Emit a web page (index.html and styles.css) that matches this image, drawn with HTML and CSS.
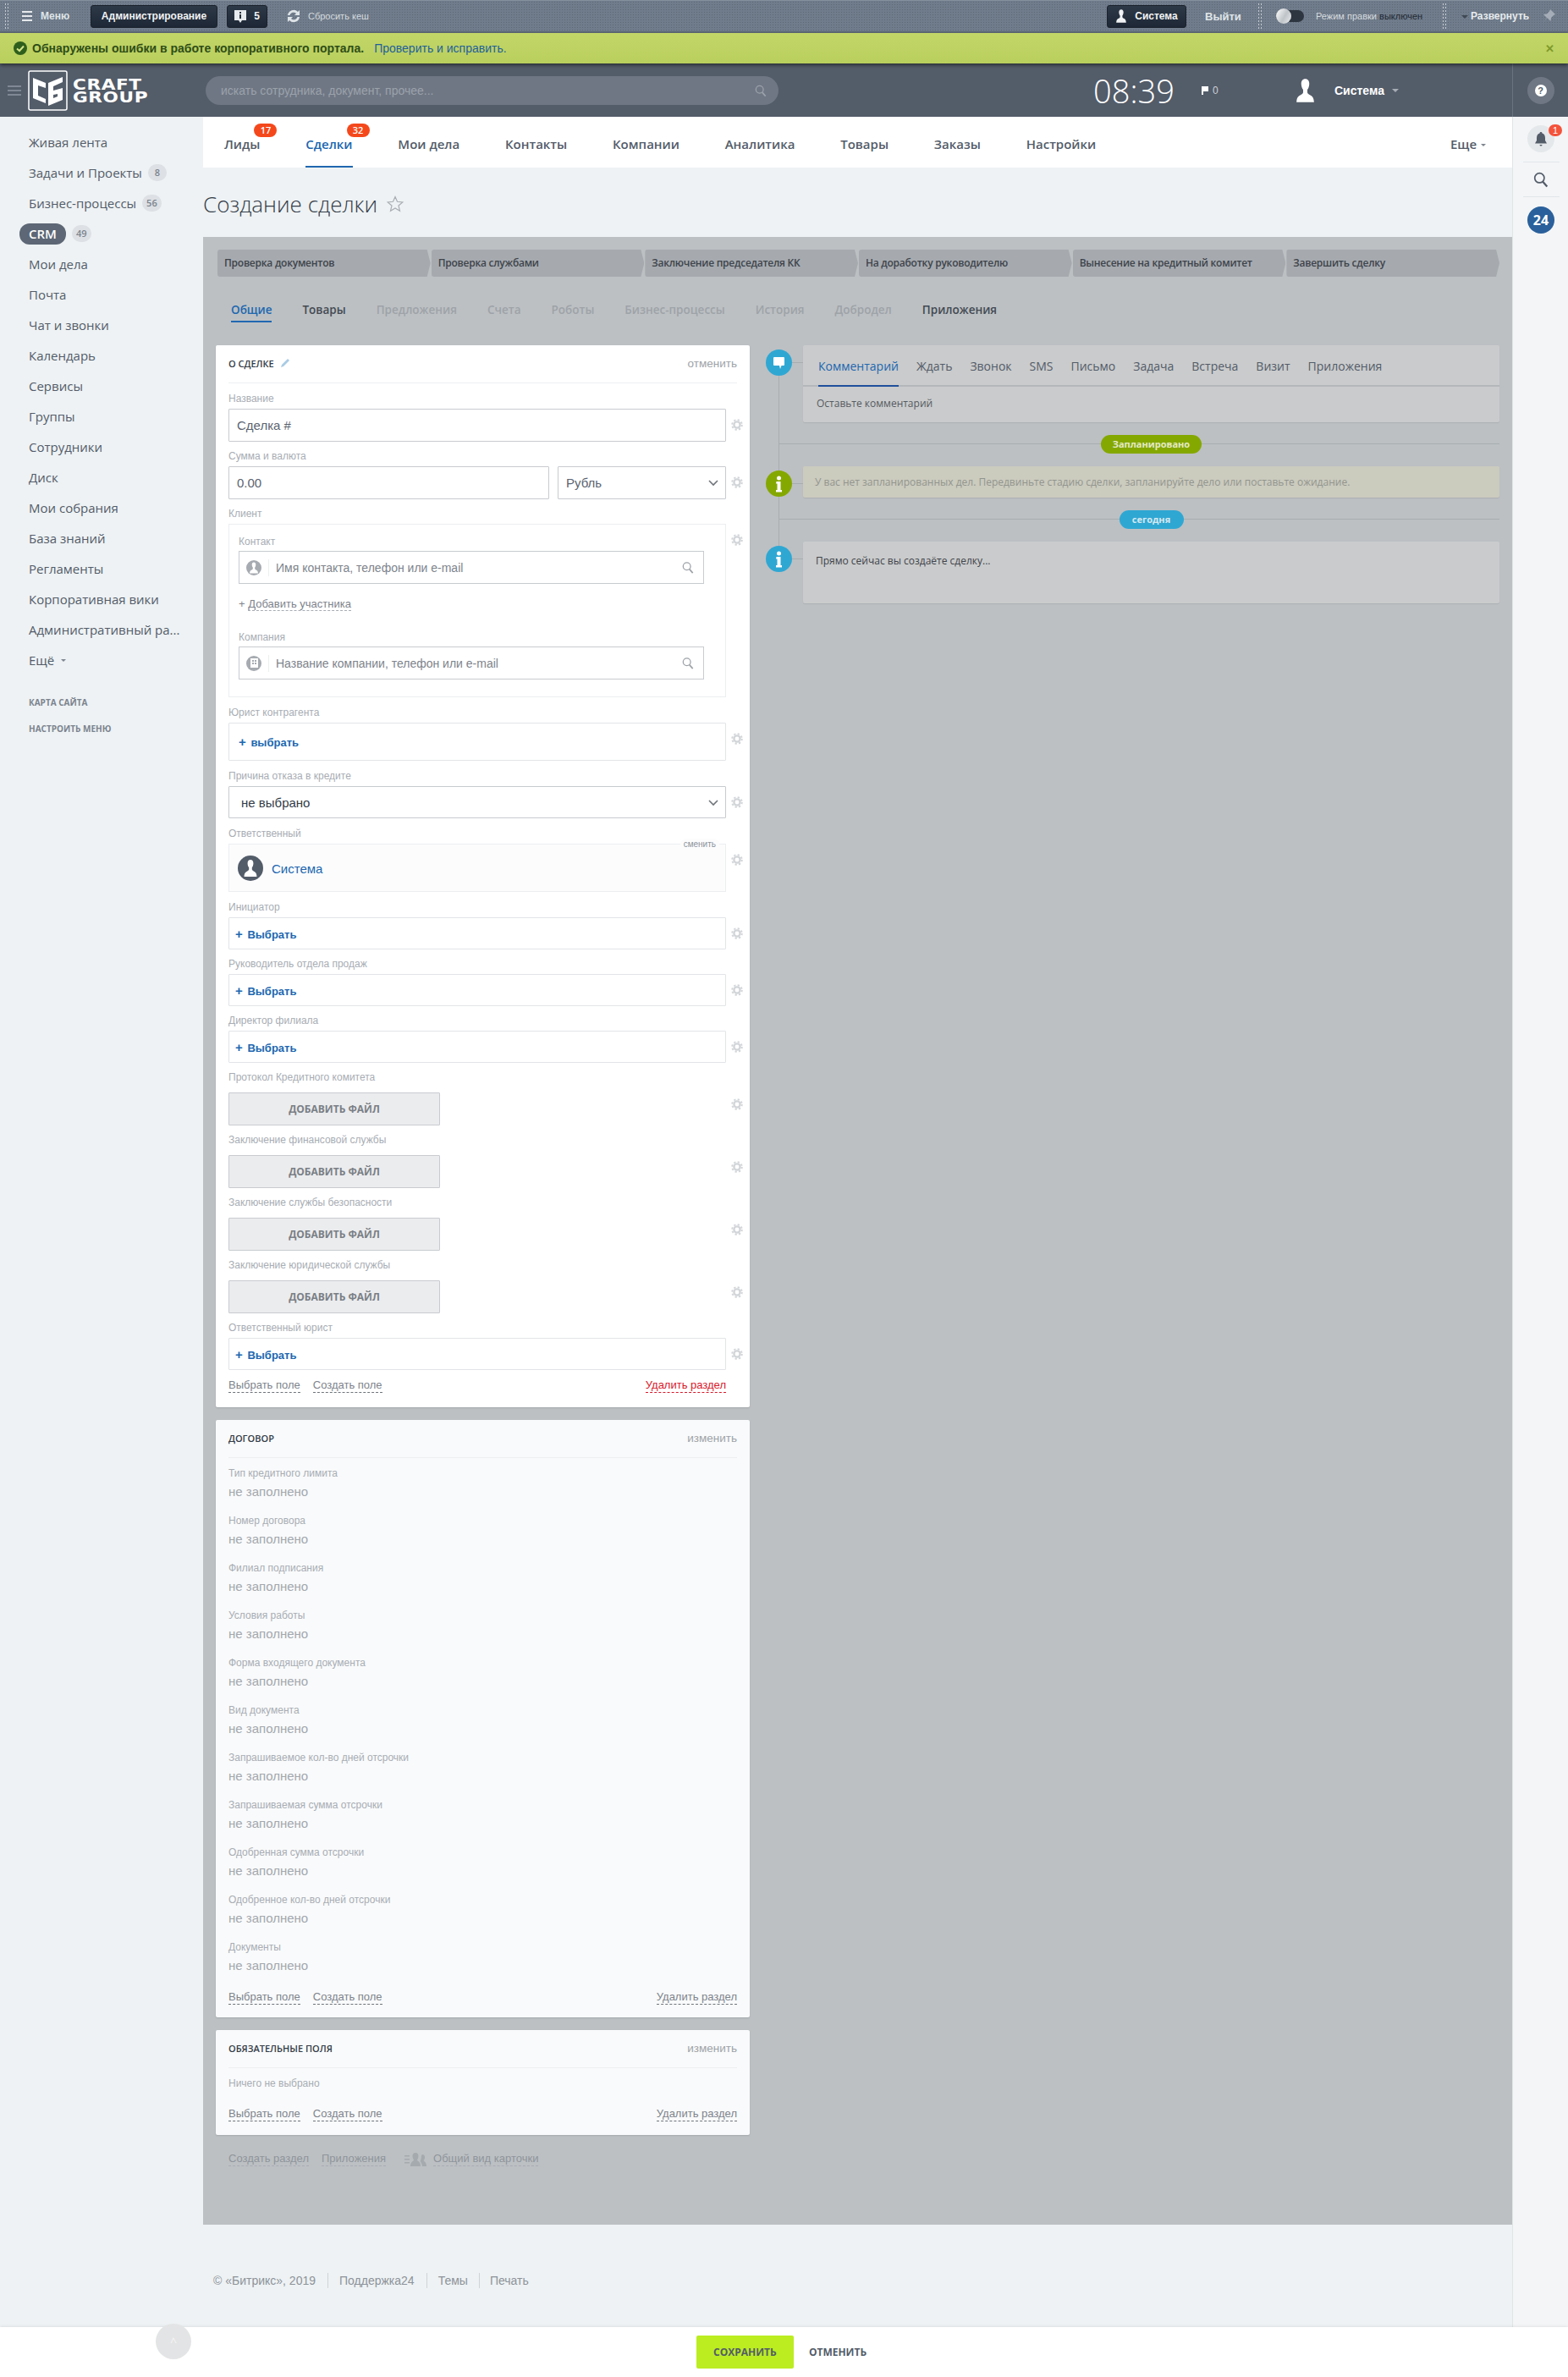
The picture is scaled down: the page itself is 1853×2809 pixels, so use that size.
FILE: index.html
```html
<!DOCTYPE html>
<html lang="ru">
<head>
    <meta charset="UTF-8">
    <meta name="viewport" content="width=device-width, initial-scale=1.0">
    <title>Создание сделки</title>
    <link rel="stylesheet" href="styles.css">
</head>
<body>
    <svg class="sprite" width="0" height="0">
        <symbol id="gear" viewBox="0 0 14 14">
            <circle cx="7" cy="7" r="3.6" fill="none" stroke="currentColor" stroke-width="2.4"/>
            <circle cx="7" cy="7" r="5.8" fill="none" stroke="currentColor" stroke-width="2" stroke-dasharray="2.3 2.25"/>
        </symbol>
        <symbol id="lens" viewBox="0 0 16 16">
            <circle cx="6.5" cy="6.5" r="5" fill="none" stroke="currentColor" stroke-width="1.5"/>
            <path d="M10 10.5l4.5 5" fill="none" stroke="currentColor" stroke-width="2"/>
        </symbol>
        <symbol id="person" viewBox="0 0 20 22">
            <path d="M10 0c2.6 0 3.8 2 3.8 4.6 0 2.300-.8 4.400-1.800 5.600v2.300c0 1.200 1 1.800 2.400 2.600 2 1 3.600 2 3.900 6.900H1.700c.3-4.900 1.900-5.900 3.900-6.900 1.400-.8 2.400-1.400 2.400-2.600v-2.300C7 9 6.200 6.900 6.200 4.600 6.200 2 7.400 0 10 0z" fill="currentColor"/>
        </symbol>
        <symbol id="info" viewBox="0 0 31 31">
            <circle cx="15.500" cy="9" r="2.500" fill="#fff"/>
            <path d="M12.500 13h5v10h1.500v2.500h-7V23h1.500v-7.500h-1.500z" fill="#fff"/>
        </symbol>
    </svg>

    <div class="admin-bar">
        <span class="grip"></span>
        <span class="burger small"><i></i><i></i><i></i></span>
        <span class="admin-menu">Меню</span>
        <a class="dark-btn admin-btn">Администрирование</a>
        <a class="dark-btn count-btn">
            <svg width="14" height="17" viewBox="0 0 14 17"><path d="M0 1h14v12H9l-2 3-2-3H0z" fill="#e7ebee"/><path d="M6 3h2v2H6zM6 6h2v5H6z" fill="#27303c"/></svg>
            <span>5</span>
        </a>
        <svg class="cache-icon" width="18" height="18" viewBox="0 0 18 18"><path d="M2 8a7 7 0 0 1 12-4l2-2v6h-6l2-2a4.500 4.500 0 0 0-7.500 2zM16 10a7 7 0 0 1-12 4l-2 2v-6h6l-2 2a4.500 4.500 0 0 0 7.500-2z" fill="#dfe4e8"/></svg>
        <span class="cache-text">Сбросить кеш</span>

        <a class="dark-btn user-btn">
            <svg width="14" height="16"><use href="#person"/></svg>
            Система
        </a>
        <span class="logout">Выйти</span>
        <span class="grip"></span>
        <span class="toggle"><i></i></span>
        <span class="edit-mode">Режим правки <b>выключен</b></span>
        <span class="grip"></span>
        <span class="expand">Развернуть</span>
        <svg class="pin" width="16" height="16" viewBox="0 0 16 16"><path d="M10 0l6 6-2 1-3 3-.5 4-4-4-5.500 6 5-6-4-4 4-.5 3-3z" fill="#a5aeb8"/></svg>
    </div>

    <div class="notice">
        <svg class="notice-check" width="16" height="16" viewBox="0 0 16 16"><circle cx="8" cy="8" r="8" fill="#2f5f1c"/><path d="M4 8.500l3 2.500 5-5.500" fill="none" stroke="#d6e58a" stroke-width="2"/></svg>
        <b>Обнаружены ошибки в работе корпоративного портала.</b>
        <a>Проверить и исправить.</a>
        <span class="notice-close">✕</span>
    </div>

    <header class="header">
        <span class="burger"><i></i><i></i><i></i></span>
        <div class="logo">
            <svg class="logo-mark" width="47" height="48" viewBox="0 0 47 48">
                <rect x="1" y="1" width="45" height="46" rx="2" fill="none" stroke="#fff" stroke-width="1.500"/>
                <path d="M6 9l15 6v6l-9-3v12l9 4v5L6 33z" fill="#fff"/>
                <path d="M41 8L24 15v27l17-7V21l-11 3v5l5-1v3l-5 2V19l11-5z" fill="#fff"/>
            </svg>
            <div class="logo-text">CRAFT<br>GROUP</div>
        </div>
        <div class="search">
            <span>искать сотрудника, документ, прочее...</span>
            <svg width="14" height="16"><use href="#lens"/></svg>
        </div>
        <div class="clock">08:39</div>
        <div class="flag">
            <svg width="8" height="10" viewBox="0 0 8 10"><path d="M0 0h8v6H2v4H0z" fill="#fff"/></svg>
            <span>0</span>
        </div>
        <svg class="avatar" width="25" height="28"><use href="#person"/></svg>
        <div class="user-name">Система</div>
        <span class="caret"></span>
        <div class="header-rail"><span class="help"><i>?</i></span></div>
    </header>

    <div class="page">
        <aside class="sidebar">
            <ul class="side-menu">
                <li>Живая лента</li>
                <li>Задачи и Проекты <span class="count">8</span></li>
                <li>Бизнес-процессы <span class="count">56</span></li>
                <li class="side-active"><span class="pill">CRM</span> <span class="count">49</span></li>
                <li>Мои дела</li>
                <li>Почта</li>
                <li>Чат и звонки</li>
                <li>Календарь</li>
                <li>Сервисы</li>
                <li>Группы</li>
                <li>Сотрудники</li>
                <li>Диск</li>
                <li>Мои собрания</li>
                <li>База знаний</li>
                <li>Регламенты</li>
                <li>Корпоративная вики</li>
                <li>Административный ра...</li>
                <li>Ещё <span class="caret gray"></span></li>
            </ul>
            <div class="side-links">
                <a>КАРТА САЙТА</a>
                <a>НАСТРОИТЬ МЕНЮ</a>
            </div>
        </aside>

        <main class="content">
            <nav class="top-nav">
                <a class="nav-item">Лиды<span class="nav-badge">17</span></a>
                <a class="nav-item active">Сделки<span class="nav-badge">32</span></a>
                <a class="nav-item">Мои дела</a>
                <a class="nav-item">Контакты</a>
                <a class="nav-item">Компании</a>
                <a class="nav-item">Аналитика</a>
                <a class="nav-item">Товары</a>
                <a class="nav-item">Заказы</a>
                <a class="nav-item">Настройки</a>
                <a class="nav-item nav-more">Еще <span class="caret gray"></span></a>
            </nav>

            <div class="title-row">
                <h1>Создание сделки</h1>
                <svg width="20" height="20" viewBox="0 0 20 20"><path d="M10 1.500l2.500 5.800 6.300.6-4.800 4.100 1.500 6.200L10 15l-5.500 3.200L6 12 1.200 7.900l6.300-.6z" fill="none" stroke="#a9aeb3" stroke-width="1.200"/></svg>
            </div>

            <section class="panel">
                <div class="stages">
                    <div class="stage">Проверка документов</div>
                    <div class="stage">Проверка службами</div>
                    <div class="stage">Заключение председателя КК</div>
                    <div class="stage">На доработку руководителю</div>
                    <div class="stage">Вынесение на кредитный комитет</div>
                    <div class="stage">Завершить сделку</div>
                </div>

                <div class="tabs">
                    <a class="tab active">Общие</a>
                    <a class="tab dark">Товары</a>
                    <a class="tab">Предложения</a>
                    <a class="tab">Счета</a>
                    <a class="tab">Роботы</a>
                    <a class="tab">Бизнес-процессы</a>
                    <a class="tab">История</a>
                    <a class="tab">Добродел</a>
                    <a class="tab dark">Приложения</a>
                </div>

                <div class="columns">
                    <div class="left-col">
                        <div class="card edit-card">
                            <div class="card-head">
                                <span class="card-title">О СДЕЛКЕ
                                    <svg width="10" height="10" viewBox="0 0 10 10"><path d="M8 0l2 2-7 7-3 1 1-3z" fill="#a9cbe4"/></svg>
                                </span>
                                <a class="card-action">отменить</a>
                            </div>

                            <div class="field">
                                <div class="label">Название</div>
                                <div class="row">
                                    <input class="input" value="Сделка #">
                                    <svg class="gear"><use href="#gear"/></svg>
                                </div>
                            </div>

                            <div class="field">
                                <div class="label">Сумма и валюта</div>
                                <div class="row">
                                    <div class="money">
                                        <input class="input money-value" value="0.00">
                                        <div class="select-wrap money-currency">
                                            <select class="input select"><option>Рубль</option></select>
                                            <svg class="chevron" width="12" height="8" viewBox="0 0 12 8"><path d="M1 1l5 5 5-5" fill="none" stroke="#6f747a" stroke-width="1.600"/></svg>
                                        </div>
                                    </div>
                                    <svg class="gear"><use href="#gear"/></svg>
                                </div>
                            </div>

                            <div class="field field-loose">
                                <div class="label">Клиент</div>
                                <div class="row">
                                    <div class="client-box">
                                        <div class="label inner">Контакт</div>
                                        <div class="search-input">
                                            <span class="entity-icon"><svg width="12" height="14"><use href="#person"/></svg></span>
                                            <span class="search-text">Имя контакта, телефон или e-mail</span>
                                            <svg class="lens" width="14" height="15"><use href="#lens"/></svg>
                                        </div>
                                        <div class="add-member">+ <a>Добавить участника</a></div>
                                        <div class="label inner">Компания</div>
                                        <div class="search-input">
                                            <span class="entity-icon"><svg width="9" height="11" viewBox="0 0 9 11"><path d="M0 0h9v11H0z" fill="#fff"/><path d="M2 2h2v2H2zM5 2h2v2H5zM2 5h2v2H2zM5 5h2v2H5z" fill="#a6abb1"/></svg></span>
                                            <span class="search-text">Название компании, телефон или e-mail</span>
                                            <svg class="lens" width="14" height="15"><use href="#lens"/></svg>
                                        </div>
                                    </div>
                                    <svg class="gear"><use href="#gear"/></svg>
                                </div>
                            </div>

                            <div class="field field-loose">
                                <div class="label">Юрист контрагента</div>
                                <div class="row">
                                    <div class="picker tall"><a class="pick"><span>+</span> выбрать</a></div>
                                    <svg class="gear"><use href="#gear"/></svg>
                                </div>
                            </div>

                            <div class="field field-loose">
                                <div class="label">Причина отказа в кредите</div>
                                <div class="row">
                                    <div class="select-wrap full">
                                        <select class="input select dark-value"><option>не выбрано</option></select>
                                        <svg class="chevron" width="12" height="8" viewBox="0 0 12 8"><path d="M1 1l5 5 5-5" fill="none" stroke="#6f747a" stroke-width="1.600"/></svg>
                                    </div>
                                    <svg class="gear"><use href="#gear"/></svg>
                                </div>
                            </div>

                            <div class="field field-loose">
                                <div class="label">Ответственный</div>
                                <div class="row">
                                    <div class="owner-box">
                                        <span class="owner-avatar"><svg width="18" height="20"><use href="#person"/></svg></span>
                                        <a class="owner-name">Система</a>
                                        <span class="owner-change">сменить</span>
                                    </div>
                                    <svg class="gear"><use href="#gear"/></svg>
                                </div>
                            </div>

                            <div class="field">
                                <div class="label">Инициатор</div>
                                <div class="row">
                                    <div class="picker"><a class="pick"><span>+</span> Выбрать</a></div>
                                    <svg class="gear"><use href="#gear"/></svg>
                                </div>
                            </div>

                            <div class="field">
                                <div class="label">Руководитель отдела продаж</div>
                                <div class="row">
                                    <div class="picker"><a class="pick"><span>+</span> Выбрать</a></div>
                                    <svg class="gear"><use href="#gear"/></svg>
                                </div>
                            </div>

                            <div class="field">
                                <div class="label">Директор филиала</div>
                                <div class="row">
                                    <div class="picker"><a class="pick"><span>+</span> Выбрать</a></div>
                                    <svg class="gear"><use href="#gear"/></svg>
                                </div>
                            </div>

                            <div class="field field-file">
                                <div class="label">Протокол Кредитного комитета</div>
                                <div class="row">
                                    <button class="file-btn">ДОБАВИТЬ ФАЙЛ</button>
                                    <svg class="gear"><use href="#gear"/></svg>
                                </div>
                            </div>

                            <div class="field field-file">
                                <div class="label">Заключение финансовой службы</div>
                                <div class="row">
                                    <button class="file-btn">ДОБАВИТЬ ФАЙЛ</button>
                                    <svg class="gear"><use href="#gear"/></svg>
                                </div>
                            </div>

                            <div class="field field-file">
                                <div class="label">Заключение службы безопасности</div>
                                <div class="row">
                                    <button class="file-btn">ДОБАВИТЬ ФАЙЛ</button>
                                    <svg class="gear"><use href="#gear"/></svg>
                                </div>
                            </div>

                            <div class="field field-file">
                                <div class="label">Заключение юридической службы</div>
                                <div class="row">
                                    <button class="file-btn">ДОБАВИТЬ ФАЙЛ</button>
                                    <svg class="gear"><use href="#gear"/></svg>
                                </div>
                            </div>

                            <div class="field">
                                <div class="label">Ответственный юрист</div>
                                <div class="row">
                                    <div class="picker"><a class="pick"><span>+</span> Выбрать</a></div>
                                    <svg class="gear"><use href="#gear"/></svg>
                                </div>
                            </div>

                            <div class="card-links edit-links">
                                <a class="dash">Выбрать поле</a>
                                <a class="dash">Создать поле</a>
                                <a class="dash danger">Удалить раздел</a>
                            </div>
                        </div>

                        <div class="card view-card">
                            <div class="card-head">
                                <span class="card-title">ДОГОВОР</span>
                                <a class="card-action">изменить</a>
                            </div>
                            <div class="view-field"><div class="label">Тип кредитного лимита</div><div class="value">не заполнено</div></div>
                            <div class="view-field"><div class="label">Номер договора</div><div class="value">не заполнено</div></div>
                            <div class="view-field"><div class="label">Филиал подписания</div><div class="value">не заполнено</div></div>
                            <div class="view-field"><div class="label">Условия работы</div><div class="value">не заполнено</div></div>
                            <div class="view-field"><div class="label">Форма входящего документа</div><div class="value">не заполнено</div></div>
                            <div class="view-field"><div class="label">Вид документа</div><div class="value">не заполнено</div></div>
                            <div class="view-field"><div class="label">Запрашиваемое кол-во дней отсрочки</div><div class="value">не заполнено</div></div>
                            <div class="view-field"><div class="label">Запрашиваемая сумма отсрочки</div><div class="value">не заполнено</div></div>
                            <div class="view-field"><div class="label">Одобренная сумма отсрочки</div><div class="value">не заполнено</div></div>
                            <div class="view-field"><div class="label">Одобренное кол-во дней отсрочки</div><div class="value">не заполнено</div></div>
                            <div class="view-field"><div class="label">Документы</div><div class="value">не заполнено</div></div>
                            <div class="card-links">
                                <a class="dash">Выбрать поле</a>
                                <a class="dash">Создать поле</a>
                                <a class="dash end">Удалить раздел</a>
                            </div>
                        </div>

                        <div class="card view-card required-card">
                            <div class="card-head">
                                <span class="card-title">ОБЯЗАТЕЛЬНЫЕ ПОЛЯ</span>
                                <a class="card-action">изменить</a>
                            </div>
                            <div class="label empty-note">Ничего не выбрано</div>
                            <div class="card-links">
                                <a class="dash">Выбрать поле</a>
                                <a class="dash">Создать поле</a>
                                <a class="dash end">Удалить раздел</a>
                            </div>
                        </div>

                        <div class="panel-links">
                            <a>Создать раздел</a>
                            <a>Приложения</a>
                            <svg width="26" height="16" viewBox="0 0 26 16"><path d="M0 3h6v1.500H0zM0 7h6v1.500H0zM0 11h6v1.500H0z" fill="#a5aaae"/><path d="M13 0c2.500 0 3.500 2 3.500 4 0 2-1 3.500-1.500 4.500 0 1.500 4 1.500 4 7.500H7c0-6 4-6 4-7.500C10.500 7.500 9.500 6 9.500 4c0-2 1-4 3.500-4z" fill="#a5aaae"/><path d="M21 2c2 0 3 1.500 3 3.500 0 1.500-.8 3-1.300 3.800 0 1 3.300 1.500 3.300 6.700h-5c0-3-2-5-2.500-6.500.8-1 1.300-2 1.300-4 0-1.500.5-3.500 1.200-3.500z" fill="#a5aaae"/></svg>
                            <a>Общий вид карточки</a>
                        </div>
                    </div>

                    <div class="timeline">
                        <div class="tl-row">
                            <span class="tl-icon blue"><svg width="13" height="14" viewBox="0 0 13 14"><path d="M1 0h11a1 1 0 0 1 1 1v8a1 1 0 0 1-1 1H9.500L8 14l-1-4H1a1 1 0 0 1-1-1V1a1 1 0 0 1 1-1z" fill="#fff"/></svg></span>
                            <div class="tl-card composer">
                                <div class="composer-tabs">
                                    <a class="active">Комментарий</a>
                                    <a>Ждать</a>
                                    <a>Звонок</a>
                                    <a>SMS</a>
                                    <a>Письмо</a>
                                    <a>Задача</a>
                                    <a>Встреча</a>
                                    <a>Визит</a>
                                    <a>Приложения</a>
                                </div>
                                <div class="composer-hint">Оставьте комментарий</div>
                            </div>
                        </div>

                        <div class="tl-sep"><span class="tl-pill green">Запланировано</span></div>

                        <div class="tl-row">
                            <span class="tl-icon green"><svg width="31" height="31"><use href="#info"/></svg></span>
                            <div class="tl-card planned">У вас нет запланированных дел. Передвиньте стадию сделки, запланируйте дело или поставьте ожидание.</div>
                        </div>

                        <div class="tl-sep"><span class="tl-pill blue">сегодня</span></div>

                        <div class="tl-row">
                            <span class="tl-icon blue"><svg width="31" height="31"><use href="#info"/></svg></span>
                            <div class="tl-card now">Прямо сейчас вы создаёте сделку...</div>
                        </div>
                    </div>
                </div>
            </section>

            <footer class="footer">
                <span>© «Битрикс», 2019</span>
                <a>Поддержка24</a>
                <a>Темы</a>
                <a>Печать</a>
            </footer>
        </main>

        <aside class="rail">
            <span class="bell">
                <svg width="14" height="17" viewBox="0 0 14 17"><path d="M7 0c1 0 1.500.7 1.500 1.500C11 2.300 12 4.500 12 7v3l2 3.500H0L2 10V7c0-2.500 1-4.700 3.500-5.500C5.500.7 6 0 7 0zM5.500 15h3a1.500 1.500 0 0 1-3 0z" fill="#535c69"/></svg>
                <i>1</i>
            </span>
            <span class="rail-line"></span>
            <svg class="rail-search" width="18" height="20"><use href="#lens"/></svg>
            <span class="rail-line"></span>
            <span class="b24">24</span>
        </aside>
    </div>

    <div class="save-bar">
        <span class="scroll-up">^</span>
        <button class="save-btn">СОХРАНИТЬ</button>
        <button class="cancel-btn">ОТМЕНИТЬ</button>
    </div>
</body>
</html>
```

FILE: styles.css
```css
* {
    box-sizing: border-box;
}

body {
    margin: 0;
    width: 1853px;
    height: 2809px;
    overflow: hidden;
    background: #eef2f4;
    font-family: "Open Sans", sans-serif;
    color: #535c69;
}

a {
    cursor: pointer;
}

.sprite {
    position: absolute;
}

/* admin bar */

.admin-bar {
    height: 39px;
    display: flex;
    align-items: center;
    background-color: #707c8b;
    background-image: radial-gradient(rgba(40, 50, 60, 0.25) 0.6px, transparent 0.8px);
    background-size: 3px 3px;
    border-top: 1px solid #84909c;
    border-bottom: 2px solid #5f6a77;
    font-family: "Liberation Sans", sans-serif;
    font-size: 12px;
    color: #e3e7ea;
}

.grip {
    width: 6px;
    height: 33px;
    background-image: radial-gradient(#c3cad1 0.9px, transparent 1px);
    background-size: 3px 4px;
}

.admin-bar > .grip:first-child {
    margin-left: 5px;
}

.burger {
    width: 16px;
    display: flex;
    flex-direction: column;
    gap: 3px;
    margin-left: 9px;
}

.burger i {
    display: block;
    height: 2px;
    background: #7f8894;
}

.burger.small {
    width: 12px;
    margin-left: 15px;
}

.burger.small i {
    background: #e6e9ec;
}

.admin-menu {
    margin-left: 10px;
    width: 59px;
    font-weight: bold;
    font-size: 12px;
    color: #dfe4e8;
}

.dark-btn {
    height: 27px;
    display: flex;
    align-items: center;
    justify-content: center;
    background: linear-gradient(#2e3947, #1d2735);
    border: 1px solid #1a222d;
    border-radius: 3px;
    color: #f0f2f4;
    font-weight: bold;
    font-size: 12px;
}

.admin-btn {
    width: 150px;
}

.count-btn {
    width: 48px;
    margin-left: 11px;
    gap: 9px;
}

.cache-icon {
    margin-left: 22px;
}

.cache-text {
    margin-left: 8px;
    font-size: 11px;
    color: #d5dade;
}

.user-btn {
    width: 94px;
    margin-left: auto;
    gap: 9px;
    color: #f0f2f4;
}

.user-btn svg {
    color: #f0f2f4;
}

.logout {
    margin-left: 22px;
    width: 62px;
    font-size: 13px;
    font-weight: bold;
    color: #dfe4e8;
}

.toggle {
    margin-left: 16px;
    width: 33px;
    height: 14px;
    border-radius: 7px;
    background: #2d3540;
    position: relative;
}

.toggle i {
    position: absolute;
    left: 0;
    top: -2px;
    width: 18px;
    height: 18px;
    border-radius: 50%;
    background: linear-gradient(120deg, #fff, #bfc4c8 55%, #eceef0);
}

.edit-mode {
    margin-left: 14px;
    width: 149px;
    font-size: 11px;
    white-space: nowrap;
    color: #d5dade;
}

.edit-mode b {
    font-weight: normal;
    color: #1f2833;
}

.expand {
    margin-left: 14px;
    padding-left: 14px;
    width: 80px;
    flex-shrink: 0;
    font-size: 12px;
    font-weight: bold;
    white-space: nowrap;
    color: #e7ebee;
    position: relative;
}

.expand::before {
    content: "";
    position: absolute;
    left: 3px;
    top: 6px;
    border: 4px solid transparent;
    border-top-color: #3f4956;
    border-bottom: 0;
}

.pin {
    margin-left: 18px;
    margin-right: 15px;
}

/* green message */

.notice {
    height: 36px;
    display: flex;
    align-items: center;
    padding-left: 16px;
    background: linear-gradient(#c2d668, #b9cf5d);
    box-shadow: 0 2px 4px rgba(0, 0, 0, 0.5);
    position: relative;
    font-family: "Liberation Sans", sans-serif;
    font-size: 14px;
}

.notice b {
    margin-left: 6px;
    color: #2f4d17;
}

.notice a {
    margin-left: 12px;
    color: #1f5f9c;
}

.notice-close {
    margin-left: auto;
    margin-right: 16px;
    color: #7d9a2a;
    font-size: 13px;
    font-weight: bold;
}

/* header */

.header {
    height: 63px;
    display: flex;
    align-items: center;
    background: #535c69;
    color: #fff;
    font-family: "Liberation Sans", sans-serif;
}

.logo {
    margin-left: 8px;
    display: flex;
    align-items: center;
    width: 150px;
}

.logo-text {
    margin-left: 6px;
    width: 92px;
    font-family: "DejaVu Sans", sans-serif;
    font-weight: bold;
    font-size: 18px;
    line-height: 15px;
    letter-spacing: 0.5px;
    transform: scaleX(1.2);
    transform-origin: left center;
}

.search {
    margin-left: 60px;
    width: 677px;
    height: 34px;
    padding: 0 14px 0 18px;
    display: flex;
    align-items: center;
    justify-content: space-between;
    background: #6f7784;
    border-radius: 17px;
    font-size: 14px;
    color: #9ba2ab;
}

.clock {
    margin-left: 372px;
    width: 128px;
    font-family: "Open Sans", sans-serif;
    font-weight: 300;
    font-size: 38px;
}

.flag {
    display: flex;
    align-items: center;
    gap: 5px;
    width: 110px;
    font-size: 12px;
    color: #ccd0d5;
}

.avatar {
    color: #fff;
}

.user-name {
    margin-left: 22px;
    font-size: 14px;
    font-weight: bold;
}

.caret {
    display: inline-block;
    margin-left: 9px;
    border: 4px solid transparent;
    border-top-color: #a7adb5;
    border-bottom: 0;
    vertical-align: middle;
}

.caret.gray {
    margin-left: 1px;
    border-width: 3px;
    border-bottom: 0;
    border-top-color: #7f868f;
}

.header-rail {
    margin-left: auto;
    width: 66px;
    height: 100%;
    display: flex;
    align-items: center;
    justify-content: center;
    border-left: 1px solid #6a7380;
}

.help {
    width: 32px;
    height: 32px;
    border-radius: 50%;
    background: #6f7784;
    display: flex;
    align-items: center;
    justify-content: center;
}

.help i {
    width: 14px;
    height: 14px;
    border-radius: 50%;
    background: #fff;
    color: #535c69;
    font-style: normal;
    font-weight: bold;
    font-size: 11px;
    line-height: 14px;
    text-align: center;
}

/* page */

.page {
    display: flex;
    height: 2612px;
}

.sidebar {
    width: 240px;
    flex-shrink: 0;
    padding-top: 12px;
}

.side-menu {
    list-style: none;
    margin: 0;
    padding: 0;
}

.side-menu li {
    height: 36px;
    padding-left: 34px;
    display: flex;
    align-items: center;
    gap: 7px;
    font-size: 15px;
}

.side-menu .side-active {
    padding-left: 23px;
}

.pill {
    width: 55px;
    height: 25px;
    border-radius: 12px;
    background: #5d6775;
    color: #fff;
    font-size: 15px;
    font-weight: 600;
    text-align: center;
    line-height: 25px;
}

.count {
    min-width: 22px;
    height: 20px;
    padding: 0 5px;
    border-radius: 10px;
    background: #dde0e4;
    color: #7b838e;
    font-size: 11px;
    font-weight: 600;
    text-align: center;
    line-height: 20px;
}

.side-links {
    margin-top: 24px;
    padding-left: 34px;
    display: flex;
    flex-direction: column;
    gap: 15px;
    font-size: 10px;
    font-weight: 700;
    line-height: 16px;
    color: #7b838e;
}

.content {
    width: 1547px;
    flex-shrink: 0;
}

.top-nav {
    height: 60px;
    display: flex;
    gap: 53.8px;
    padding-left: 25px;
    padding-right: 31px;
    background: #fff;
}

.nav-item {
    position: relative;
    height: 60px;
    line-height: 64px;
    font-size: 15px;
    font-weight: 600;
    color: #535c69;
}

.nav-item.active {
    color: #2067b0;
    border-bottom: 2px solid #2067b0;
}

.nav-more {
    margin-left: auto;
}

.nav-badge {
    position: absolute;
    right: -20px;
    top: 8px;
    width: 27px;
    height: 16px;
    border-radius: 8px;
    background: #f4481c;
    color: #fff;
    font-size: 11px;
    font-weight: 600;
    line-height: 16px;
    text-align: center;
}

.title-row {
    height: 82px;
    padding-top: 3px;
    display: flex;
    align-items: center;
    gap: 11px;
}

.title-row h1 {
    margin: 0;
    font-size: 26px;
    font-weight: 300;
    color: #333c47;
}

/* grey panel */

.panel {
    height: 2349px;
    padding: 15px 15px 0;
    background: #bcc0c3;
}

.stages {
    display: flex;
    gap: 1px;
    margin-left: 2px;
    height: 32px;
}

.stage {
    width: 252px;
    padding-left: 8px;
    background: #a6aaaf;
    border-radius: 3px 0 0 3px;
    clip-path: polygon(0 0, calc(100% - 4px) 0, 100% 50%, calc(100% - 4px) 100%, 0 100%);
    font-size: 12px;
    font-weight: 600;
    line-height: 32px;
    color: #3e444b;
    letter-spacing: -0.25px;
}

.tabs {
    display: flex;
    gap: 36px;
    margin: 29px 0 27px 18px;
}

.tab {
    height: 25px;
    line-height: 20px;
    font-size: 13.5px;
    font-weight: 600;
    color: #9ea3a8;
}

.tab.dark {
    color: #434a53;
}

.tab.active {
    color: #2067b0;
    border-bottom: 2px solid #2067b0;
}

.columns {
    display: flex;
    gap: 19px;
}

.left-col {
    width: 631px;
    flex-shrink: 0;
    font-family: "Liberation Sans", sans-serif;
}

.card {
    background: #fff;
    padding: 0 15px;
    box-shadow: 0 1px 2px rgba(0, 0, 0, 0.12);
    border-radius: 2px;
}

.edit-card {
    height: 1255px;
}

.edit-card .card-head {
    margin-bottom: 11px;
}

.edit-card .label {
    line-height: 14px;
}

.view-card {
    margin-top: 15px;
    height: 706px;
    background: #f9fafb;
}

.required-card {
    height: 124px;
}

.card-head {
    height: 45px;
    display: flex;
    align-items: center;
    justify-content: space-between;
    border-bottom: 1px solid #edeff1;
    margin-bottom: 10px;
    padding-bottom: 1px;
}

.card-title {
    font-family: "Open Sans", sans-serif;
    font-size: 11px;
    font-weight: 600;
    color: #333c47;
}

.card-title svg {
    margin-left: 5px;
}

.card-action {
    font-size: 13.5px;
    color: #9ea3a8;
}

.label {
    height: 19px;
    line-height: 16px;
    font-size: 12px;
    color: #a8adb4;
}

.field {
    margin-bottom: 10px;
}

.field-loose {
    margin-bottom: 11px;
}

.field-file .label {
    height: 25px;
}

.row {
    width: 608px;
    display: flex;
    align-items: flex-start;
}

.row > * {
    flex-shrink: 0;
}

.gear {
    width: 14px;
    height: 14px;
    margin: 12px 0 0 6px;
    color: #d3d6d9;
}

.field-file .gear {
    margin-top: 7px;
    margin-left: 344px;
}

.input {
    width: 588px;
    height: 39px;
    padding: 0 9px;
    background: #fff;
    border: 1px solid #c8cbcf;
    border-radius: 1px;
    font-family: "Liberation Sans", sans-serif;
    font-size: 15px;
    color: #5c6470;
    outline: none;
}

.money {
    width: 588px;
    display: flex;
    justify-content: space-between;
}

.money-value {
    width: 379px;
}

.money-currency {
    width: 199px;
}

.select-wrap {
    position: relative;
}

.select-wrap.full {
    width: 588px;
}

.select {
    width: 100%;
    appearance: none;
}

.dark-value {
    padding-left: 14px;
    height: 38px;
    color: #333c47;
}

.chevron {
    position: absolute;
    right: 9px;
    top: 16px;
}

.client-box {
    width: 588px;
    height: 205px;
    padding: 13px 15px 0 11px;
    border: 1px solid #eceef0;
}

.label.inner {
    height: 18px;
    line-height: 14px;
}

.search-input {
    height: 39px;
    width: 550px;
    display: flex;
    align-items: center;
    padding: 0 11px 0 8px;
    border: 1px solid #c8cbcf;
    font-size: 14px;
    color: #7e848c;
}

.entity-icon {
    width: 18px;
    height: 18px;
    border-radius: 50%;
    background: #a6abb1;
    color: #fff;
    display: flex;
    align-items: center;
    justify-content: center;
    flex-shrink: 0;
}

.search-text {
    flex: 1;
    margin-left: 8px;
    padding-left: 8px;
    border-left: 1px solid #edeff1;
    line-height: 20px;
}

.lens {
    color: #9ea3a8;
}

.add-member {
    height: 56px;
    padding-top: 16px;
    font-size: 13px;
    color: #7e848c;
}

.add-member a {
    border-bottom: 1px dashed #a8adb4;
}

.picker {
    width: 588px;
    height: 38px;
    padding-left: 7px;
    display: flex;
    align-items: center;
    border: 1px solid #e2e4e7;
    border-radius: 1px;
}

.picker.tall {
    height: 45px;
    padding-left: 11px;
}

.pick {
    font-size: 13px;
    font-weight: bold;
    color: #2067b0;
}

.pick span {
    margin-right: 2px;
    font-size: 15px;
}

.owner-box {
    width: 588px;
    height: 57px;
    position: relative;
    display: flex;
    align-items: center;
    padding: 1px 0 0 10px;
    gap: 10px;
    background: #fcfcfd;
    border: 1px solid #eceef0;
}

.owner-avatar {
    width: 30px;
    height: 30px;
    border-radius: 50%;
    background: #535c69;
    color: #fff;
    display: flex;
    align-items: center;
    justify-content: center;
}

.owner-name {
    font-size: 15px;
    color: #2067b0;
}

.owner-change {
    position: absolute;
    right: 7px;
    top: -7px;
    padding: 0 4px;
    background: #fcfcfd;
    border-radius: 7px;
    font-size: 10px;
    line-height: 14px;
    color: #8d939a;
}

.file-btn {
    width: 250px;
    height: 39px;
    padding-bottom: 2px;
    background: #ebecee;
    border: 1px solid #c8cbcf;
    border-radius: 1px;
    font-family: "Open Sans", sans-serif;
    font-size: 12px;
    font-weight: 700;
    color: #7a7f85;
}

.card-links {
    display: flex;
    gap: 15px;
    font-size: 13px;
    color: #7e848c;
}

.edit-links {
    margin-top: 1px;
    padding-right: 13px;
}

.dash {
    border-bottom: 1px dashed #6f747a;
    line-height: 15px;
    padding-bottom: 1px;
}

.dash.danger,
.dash.end {
    margin-left: auto;
}

.dash.danger {
    color: #d8182a;
    border-color: #d8182a;
}

.view-field {
    height: 56px;
}

.view-field .label {
    height: 19px;
}

.value {
    font-size: 15px;
    line-height: 21px;
    color: #a3a8ae;
}

.view-card .card-links {
    margin-top: 3px;
}

.empty-note {
    height: 36px;
    margin-bottom: 0;
}

.required-card .card-links {
    margin-top: 0;
}

.panel-links {
    margin-top: 20px;
    padding-left: 15px;
    display: flex;
    align-items: center;
    gap: 15px;
    font-size: 13px;
    color: #8f959b;
}

.panel-links a {
    border-bottom: 1px dashed #a8adb4;
    line-height: 16px;
}

.panel-links svg {
    margin-left: 7px;
    margin-right: -7px;
}

/* timeline */

.timeline {
    position: relative;
    width: 867px;
    font-family: "Open Sans", sans-serif;
}

.timeline::before {
    content: "";
    position: absolute;
    left: 15px;
    top: 36px;
    height: 205px;
    border-left: 1px solid #a8adb0;
}

.tl-row {
    display: flex;
    gap: 13px;
    position: relative;
}

.tl-icon {
    width: 31px;
    height: 31px;
    margin-top: 5px;
    border-radius: 50%;
    display: flex;
    align-items: center;
    justify-content: center;
    flex-shrink: 0;
    position: relative;
}

.tl-icon::after {
    content: "";
    position: absolute;
    left: 31px;
    top: 15px;
    width: 13px;
    border-top: 1px solid #a8adb0;
}

.tl-icon.blue,
.tl-pill.blue {
    background: #2fa7d3;
}

.tl-icon.green,
.tl-pill.green {
    background: #85a800;
}

.tl-card {
    width: 823px;
    background: #cacbcc;
    border-radius: 2px;
    box-shadow: 0 1px 1px rgba(0, 0, 0, 0.08);
}

.composer {
    height: 91px;
}

.composer-tabs {
    height: 49px;
    display: flex;
    gap: 21px;
    padding-left: 18px;
    border-bottom: 2px solid #b4b7ba;
    font-size: 14px;
    line-height: 50px;
    color: #535c69;
}

.composer-tabs a.active {
    height: 49px;
    color: #2067b0;
    border-bottom: 2px solid #1f4f9c;
}

.composer-hint {
    padding: 12px 16px;
    font-size: 12px;
    line-height: 16px;
    color: #555b62;
}

.tl-sep {
    position: relative;
    height: 22px;
    margin: 15px 0;
    padding-left: 44px;
    text-align: center;
}

.tl-sep::before {
    content: "";
    position: absolute;
    left: 15px;
    right: 0;
    top: 10px;
    border-top: 1px solid #a8adb0;
}

.tl-pill {
    position: relative;
    display: inline-block;
    min-width: 76px;
    height: 22px;
    padding: 0 14px;
    border-radius: 11px;
    color: #e4eacb;
    font-size: 11px;
    font-weight: 700;
    line-height: 21px;
    vertical-align: top;
}

.tl-pill.blue {
    color: #d4e8f0;
}

.planned {
    height: 37px;
    padding-left: 14px;
    background: #cbcbbe;
    font-size: 12px;
    line-height: 37px;
    color: #92958e;
}

.now {
    height: 73px;
    padding: 14px 15px;
    font-size: 12px;
    line-height: 18px;
    color: #3e444b;
}

/* footer */

.footer {
    height: 121px;
    padding: 57px 0 0 12px;
    display: flex;
    align-items: flex-start;
    font-family: "Liberation Sans", sans-serif;
    font-size: 14px;
    color: #8d939a;
}

.footer span,
.footer a {
    height: 18px;
    line-height: 18px;
    padding-right: 14px;
    margin-right: 13px;
    border-right: 1px solid #cfd3d7;
}

.footer a:nth-child(3) {
    padding-right: 13px;
    margin-right: 12px;
}

.footer a:last-child {
    border-right: 0;
}

/* right column */

.rail {
    width: 66px;
    flex-shrink: 0;
    padding: 10px 11px 0 12px;
    display: flex;
    flex-direction: column;
    align-items: center;
    background: #f3f5f7;
    border-left: 1px solid #e1e5e8;
}

.bell {
    position: relative;
    width: 32px;
    height: 32px;
    border-radius: 50%;
    background: #e5e8ea;
    display: flex;
    align-items: center;
    justify-content: center;
}

.bell i {
    position: absolute;
    left: 25px;
    top: -1px;
    width: 16px;
    height: 14px;
    border-radius: 7px;
    background: #f4533c;
    color: #fff;
    font-family: "Liberation Sans", sans-serif;
    font-size: 11px;
    font-style: normal;
    line-height: 14px;
    text-align: center;
}

.rail-line {
    width: 43px;
    height: 1px;
    margin-top: 11px;
    background: #e3e6e9;
}

.rail-search {
    margin: 10px 0 -1px;
    color: #535c69;
}

.b24 {
    width: 32px;
    height: 32px;
    margin-top: 11px;
    border-radius: 50%;
    background: #2a609b;
    color: #fff;
    font-size: 16px;
    font-weight: 700;
    line-height: 32px;
    text-align: center;
}

/* bottom bar */

.save-bar {
    position: relative;
    height: 59px;
    display: flex;
    align-items: center;
    justify-content: center;
    gap: 18px;
    padding-right: 6px;
    background: #fff;
    box-shadow: 0 -1px 3px rgba(0, 0, 0, 0.08);
}

.scroll-up {
    position: absolute;
    left: 184px;
    top: -4px;
    width: 42px;
    height: 42px;
    border-radius: 50%;
    background: #e3e4e5;
    color: #f5f5f5;
    font-size: 14px;
    line-height: 44px;
    text-align: center;
}

.save-btn {
    width: 115px;
    height: 39px;
    background: #bbed21;
    border: 0;
    border-radius: 2px;
    font-family: "Open Sans", sans-serif;
    font-size: 12px;
    font-weight: 700;
    color: #535c69;
}

.cancel-btn {
    padding: 0;
    background: none;
    border: 0;
    font-family: "Open Sans", sans-serif;
    font-size: 12px;
    font-weight: 700;
    color: #535c69;
}
```
